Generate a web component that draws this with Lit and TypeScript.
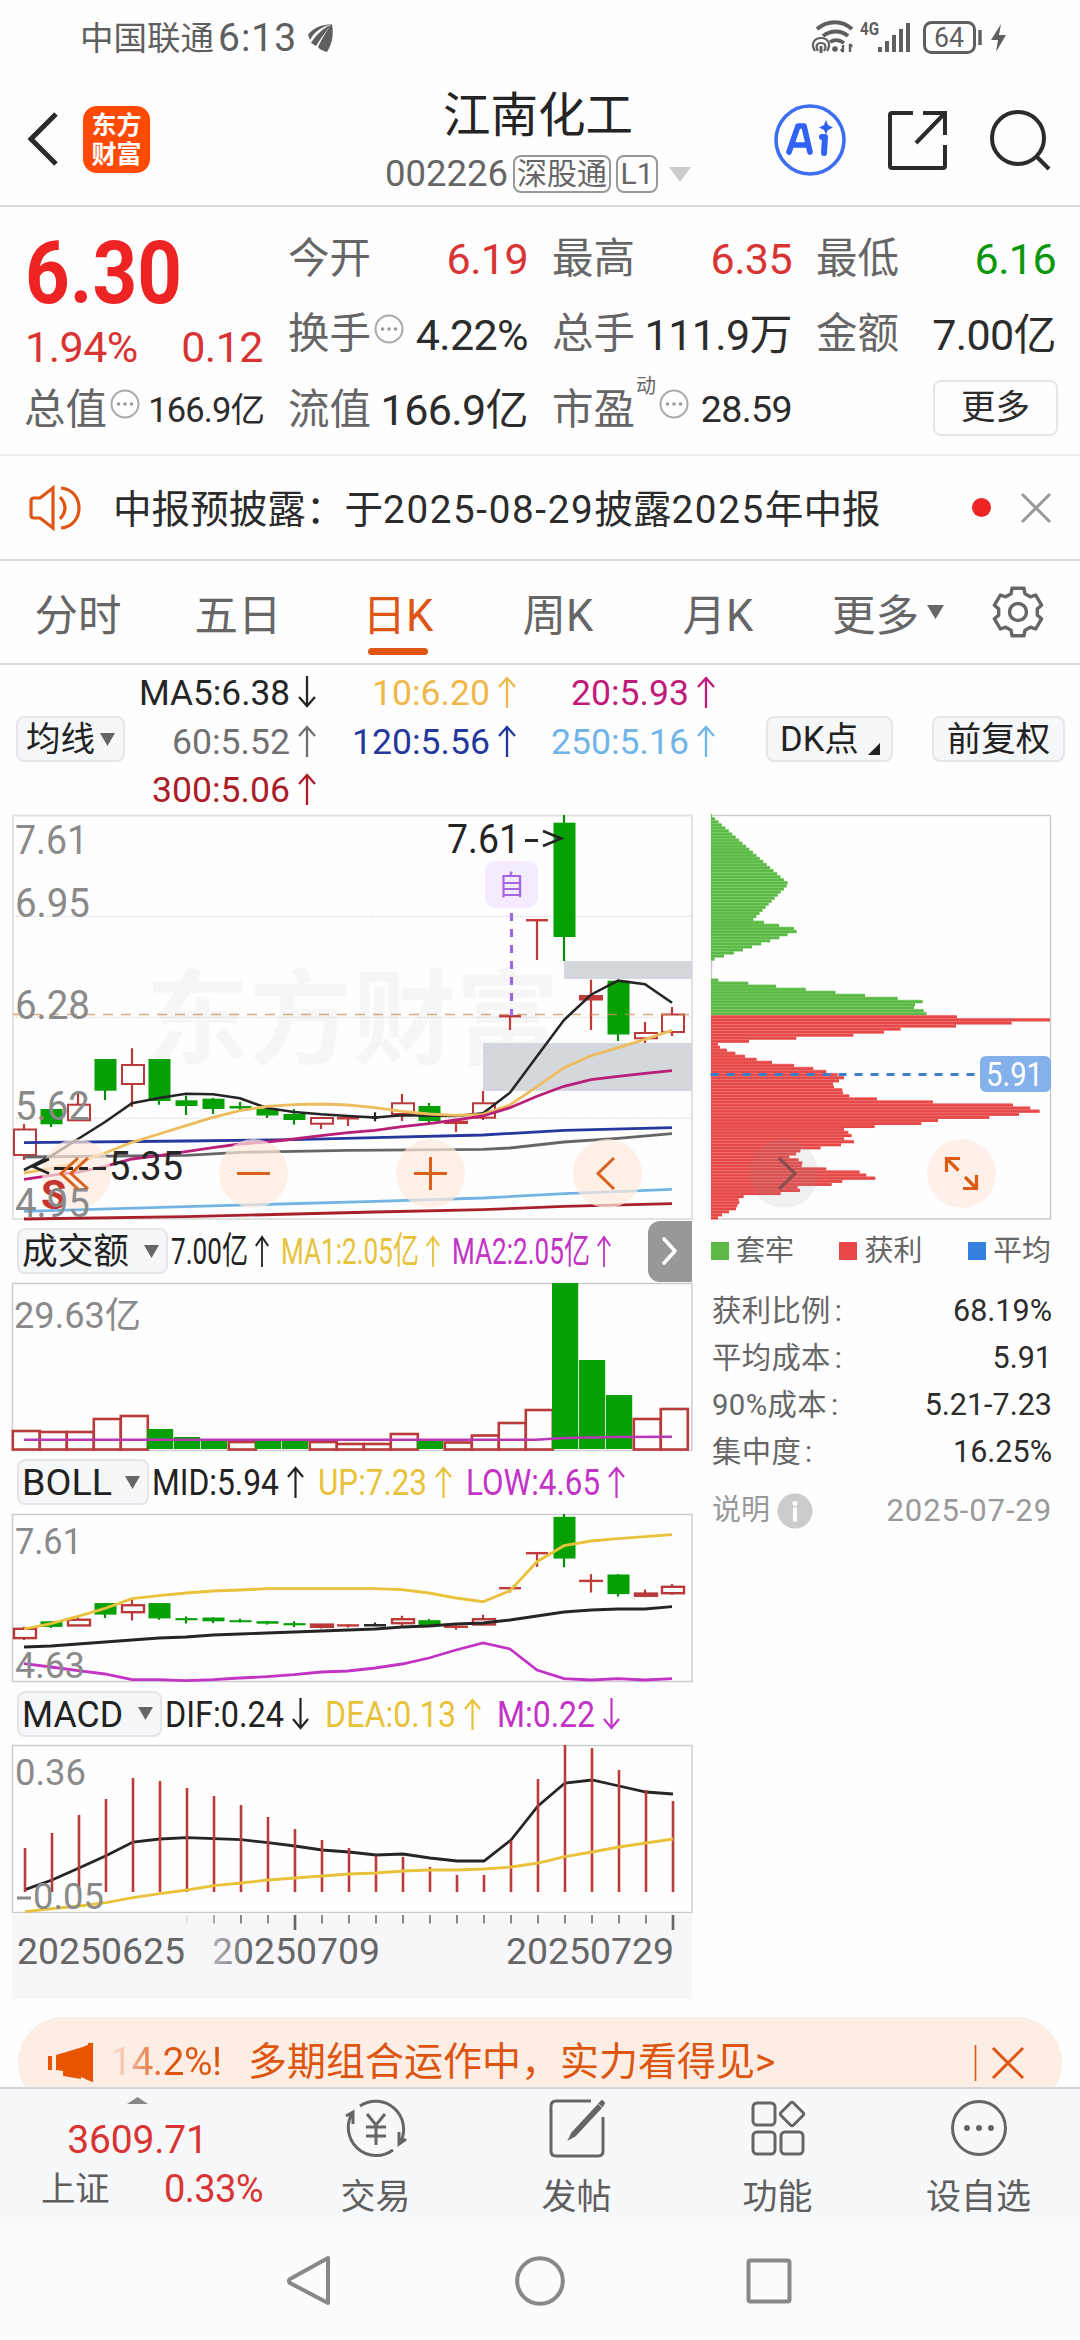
import { LitElement, html, svg, css } from "lit";
import { customElement } from "lit/decorators.js";

const RED = "#b93a3a";
const GREEN = "#04a004";
const INK = "#252525";
const GOLD = "#e8c23a";
const PURPLE = "#c233c6";

const STEP = 27;
const X0 = 24;

type Candle = { k: "r" | "g" | "f" | "b"; t: number; b: number; h: number; l: number };
const c = (k: Candle["k"], t: number, b: number, h: number, l: number): Candle => ({ k, t, b, h, l });

const CANDLES: Candle[] = [
  c("r", 1130.5, 1156, 1125, 1161), c("g", 1110, 1125.3, 1110, 1128), c("r", 1105.7, 1121.3, 1095, 1121),
  c("g", 1060, 1091.7, 1060, 1101), c("r", 1066, 1085, 1049.3, 1108), c("g", 1060, 1102, 1060, 1105.7),
  c("g", 1101.3, 1107, 1096.7, 1116), c("g", 1099.7, 1110, 1099, 1115), c("g", 1107, 1109.5, 1103, 1113),
  c("g", 1109.7, 1116.5, 1109, 1119), c("g", 1115, 1121, 1110, 1125.7), c("r", 1119, 1124.7, 1118, 1130),
  c("f", 1118, 1120.5, 1118, 1127), c("b", 1117.5, 1119.5, 1113.3, 1122.3), c("r", 1104.3, 1115, 1095, 1122),
  c("g", 1107, 1122, 1104, 1124), c("f", 1121.7, 1125, 1121, 1133), c("r", 1104.3, 1118.7, 1092, 1121),
  c("f", 1016, 1018, 1016, 1031), c("f", 920, 922, 920, 961), c("g", 823.7, 938, 816, 962),
  c("f", 996, 1001.5, 980.7, 1031), c("g", 981.7, 1035.5, 981, 1042), c("r", 1034, 1039.3, 1023, 1044),
  c("r", 1015.5, 1033, 1008, 1037),
];

const MA5 = [1171, 1157, 1140, 1123, 1104.3, 1099, 1094.7, 1095.3, 1099.3, 1109, 1113, 1115.3, 1117, 1118.5, 1116.3, 1116.7, 1117, 1114.3, 1093.7, 1057.3, 1021, 995.7, 981.7, 985.3, 1003.7];
const MA10 = [1174, 1169.3, 1163.3, 1154, 1143.3, 1135, 1126.7, 1118.3, 1111.7, 1107.3, 1105.7, 1105, 1106, 1108.7, 1112.3, 1115, 1116.3, 1115.3, 1106, 1087.7, 1068.7, 1056.7, 1048.7, 1040.3, 1031.3];
const MA20 = [1180.3, 1176.3, 1173, 1167.3, 1160, 1156.7, 1152.7, 1148.7, 1145, 1143, 1140, 1136.7, 1133.7, 1131.3, 1127.7, 1124.7, 1121, 1117, 1108.7, 1097.3, 1087.3, 1080.7, 1077.3, 1074.3, 1071.7];
const MA60: [number, number][] = [[0, 1158], [6, 1156.4], [8, 1153.3], [12, 1151.3], [17, 1150.3], [18, 1149], [20, 1143], [22, 1139.3], [24, 1134.7]];
const MA120: [number, number][] = [[0, 1143.7], [6, 1142], [10, 1140.7], [13, 1138.7], [17, 1136], [20, 1131.3], [24, 1128.7]];
const MA250: [number, number][] = [[0, 1212.3], [6, 1207.7], [13, 1202.3], [17, 1199], [20, 1194.7], [24, 1190.3]];
const MA300: [number, number][] = [[0, 1220], [6, 1217.7], [13, 1213], [17, 1210.7], [20, 1207.3], [24, 1204.7]];

const VOLUME: [string, number][] = [
  ["r", 1432], ["r", 1433], ["r", 1433], ["r", 1420], ["r", 1417], ["g", 1430], ["g", 1438], ["g", 1441], ["r", 1443], ["g", 1441],
  ["g", 1441], ["r", 1443], ["r", 1445], ["r", 1445], ["r", 1435], ["g", 1441], ["r", 1443.5], ["r", 1436.5], ["r", 1424], ["r", 1411],
  ["g", 1284], ["g", 1361], ["g", 1396], ["r", 1420], ["r", 1410],
];

const BOLL_UP = [1630, 1624.7, 1617.3, 1609.3, 1599.7, 1596.7, 1594, 1592, 1591, 1589.7, 1589.7, 1589.7, 1589.7, 1589.7, 1590.7, 1594, 1599, 1602.7, 1591.7, 1562.7, 1546.7, 1542, 1539.7, 1537.7, 1535.7];
const BOLL_MID = [1648, 1647, 1645, 1643, 1641, 1639, 1638, 1636, 1635, 1634, 1633, 1632, 1631, 1630, 1628, 1627, 1625, 1624, 1621, 1617, 1613, 1611, 1610, 1610, 1607.7];
const BOLL_LOW = [1664.7, 1668, 1671.7, 1675, 1680.7, 1680.7, 1681.7, 1680.7, 1679, 1677.7, 1675.7, 1673, 1672, 1669, 1665, 1659, 1651, 1644, 1650, 1671, 1679.7, 1681, 1679.7, 1681, 1679.7];

const third = (a: number[]) => a.map((v) => 1740 + v / 3);
const MACD_BAR = third([327, 282, 228, 180, 117, 126, 147, 171, 198, 234, 270, 303, 327, 350, 354, 384, 408, 408, 305, 120, 18, 27, 93, 153, 186]);
const DIF = third([452, 423, 387, 350, 309, 300, 296, 299, 302, 311, 321, 333, 339, 348, 345, 357, 366, 366, 303, 201, 132, 123, 141, 159, 165]);
const DEA = third([518, 509, 501, 491, 476, 464, 453, 440, 432, 423, 417, 411, 405, 402, 396, 393, 393, 390, 384, 372, 353, 339, 324, 312, 300]);

/* Cost distribution outline: level, extent. */
const CHIPS: [number, number][] = [
  [35, 35], [237, 263], [246, 260], [346, 160], [356, 192], [365, 237], [374, 282], [383, 290], [392, 263], [456, 72], [467, 44],
  [470, 33], [523, 33], [529, 55], [538, 145], [584, 593], [593, 668], [602, 645], [611, 642], [620, 671], [629, 680],
  [638, 771], [648, 1050], [658, 935], [667, 768], [676, 602], [685, 552], [694, 460], [703, 289], [712, 147], [721, 54], [730, 60],
  [739, 81], [748, 106], [757, 135], [767, 170], [776, 216], [785, 282], [794, 340], [803, 379], [812, 413], [821, 432], [831, 417],
  [840, 399], [849, 402], [858, 427], [867, 429], [877, 448], [886, 531], [895, 699], [904, 939], [913, 991], [922, 1019], [931, 957],
  [940, 868], [950, 714], [959, 664], [968, 524], [977, 432], [986, 445], [995, 455], [1004, 432], [1014, 462], [1023, 423], [1032, 362],
  [1041, 301], [1050, 288], [1059, 268], [1068, 296], [1078, 307], [1087, 305], [1096, 379], [1105, 479], [1114, 499], [1123, 526],
  [1133, 427], [1142, 395], [1151, 293], [1160, 300], [1169, 242], [1178, 131], [1187, 116], [1196, 118], [1205, 112], [1215, 108],
  [1224, 87], [1233, 66], [1242, 54],
];

/* Sampled levels are used as they are; levels between two samples are interpolated. */
function chipAt(level: number): number {
  const exact = CHIPS.find(([y]) => Math.abs(y - level) < 3.5);
  if (exact) return exact[1];
  for (let i = 1; i < CHIPS.length; i++) {
    const [y1, x1] = CHIPS[i];
    if (level <= y1) {
      const [y0, x0] = CHIPS[i - 1];
      return x0 + ((x1 - x0) * (level - y0)) / (y1 - y0);
    }
  }
  return 54;
}

const line = (pts: number[], color: string, w = 2.6, x0 = X0) =>
  svg`<polyline points=${pts.map((y, i) => `${x0 + i * STEP},${y}`).join(" ")} fill="none" stroke=${color} stroke-width=${w}/>`;
const sparse = (pts: [number, number][], color: string) =>
  svg`<polyline points=${pts.map(([i, y]) => `${X0 + i * STEP},${y}`).join(" ")} fill="none" stroke=${color} stroke-width="2.8"/>`;

function candles(map: (y: number) => number, sw: number) {
  return CANDLES.map((d, i) => {
    const x = X0 + i * STEP;
    const t = map(d.t), b = map(d.b), h = map(d.h), l = map(d.l);
    if (d.k === "g") return svg`<path d="M${x} ${h}V${l}" stroke="#0a8a0a" stroke-width="2.2"/><rect x=${x - 10.5} y=${t} width="22" height=${Math.max(b - t, 2)} fill=${GREEN}/>`;
    if (d.k === "r") return svg`<path d="M${x} ${h}V${t}M${x} ${b}V${l}" stroke=${RED} stroke-width="2.2"/><rect x=${x - 10} y=${t} width="22" height=${Math.max(b - t, 2.2)} fill="#fff" stroke=${RED} stroke-width=${sw}/>`;
    const col = d.k === "b" ? INK : "#c23a3a";
    const hw = d.h === d.t ? 11 : d.k === "b" ? (sw > 2 ? 11 : 3) : 12;
    return svg`<path d="M${x} ${h}V${l}" stroke=${col} stroke-width="2.2"/><rect x=${x - hw} y=${t} width=${hw * 2} height=${Math.max(b - t, 2.4)} fill=${col}/>`;
  });
}

const tx = (s: string, x: number, y: number, w: number, size = 37, color = "#8a8a8a", weight = 400) =>
  svg`<text x=${x} y=${y} textLength=${w} lengthAdjust="spacingAndGlyphs" font-size=${size} font-weight=${weight} fill=${color}>${s}</text>`;

const fit = (s: string, w: number, color: string, size = 37) =>
  html`<svg width=${w} height="46">${tx(s, 0, 36, w, size, color)}</svg>`;

const arrow = (up: boolean, color: string, w = 18) => html`<svg width=${w} height="34" viewBox="0 0 18 34" preserveAspectRatio="none">
  <path d=${up ? "M9 33V3M1 12L9 3L17 12" : "M9 1V31M1 22L9 31L17 22"} fill="none" stroke=${color} stroke-width="2.3"/></svg>`;

const sheet = css`
  :host { display: block; font-family: Roboto, "Noto Sans CJK SC", sans-serif; line-height: 1.17; }
  * { box-sizing: border-box; }
  svg { display: block; flex: none; overflow: visible; }
`;

@customElement("quote-header")
class QuoteHeader extends LitElement {
  static styles = [sheet, css`
    .status { height: 76px; padding: 0 73px 0 80px; display: flex; align-items: center; color: #5f5f5f; }
    .carrier { font-size: 33.5px; line-height: 46px; margin-top: 1px; }
    .clock { font-size: 39px; margin: 1px 10px 0 4px; letter-spacing: 1px; }
    .sp { flex: 1; }
    .bar { height: 131px; border-bottom: 2px solid #dadada; display: flex; align-items: center; padding: 0 29px 4px 27px; }
    .logo { width: 67px; height: 67px; border-radius: 14px; background: #ff4a05; margin-left: 24px; margin-top: 2px; color: #fff; font: 700 25px/29px "Noto Sans CJK SC", sans-serif; text-align: center; padding-top: 3px; }
    .mid { flex: 1; display: flex; flex-direction: column; align-items: center; padding: 8px 12px 0 165px; }
    .name { font-size: 47.500px; line-height: 60px; color: #242424; white-space: nowrap; }
    .sub { display: flex; align-items: center; color: #666; font-size: 36.5px; height: 50px; gap: 5px; margin-top: 3px; }
    .tag { border: 2px solid #999; border-radius: 8px; height: 38px; font-size: 30px; line-height: 34px; padding: 0 2px; }
    .l1 { width: 42px; text-align: center; }
    .tri { margin-left: 6px; }
    .icons { display: flex; align-items: center; margin-top: 3px; }
    .icons svg + svg { margin-left: 40px; }
  `];
  render() {
    return html`
      <div class="status">
        <span class="carrier">中国联通</span><span class="clock">6:13</span>
        <svg width="26" height="30" viewBox="0 0 26 30" fill="#5f5f5f"><path d="M1 12C6 5 13 2 25 1C14 4 7 9 3 17Z"/><path d="M4 20C9 12 15 6 25 1C19 8 14 15 9 23Z"/><path d="M11 24C15 15 20 7 25 1C27 12 25 21 20 29C17 28 13 27 11 24Z"/></svg>
        <span class="sp"></span>
        <svg width="195" height="36" viewBox="812 19 195 36" fill="none" stroke="#5f5f5f">
          <path d="M817 28C828 19 842 19 852 28" stroke-width="4"/><path d="M823 35C831 29 841 29 848 35" stroke-width="4"/>
          <path d="M830 41C835 38 840 39 844 42" stroke-width="3.5"/>
          <path d="M815 50C810 42 815 37 821 37S832 42 827 50M818 50C815 45 817 42 821 42S827 45 824 50" stroke-width="2.2"/><path d="M821 45V52" stroke-width="3"/>
          <circle cx="835" cy="48" r="2.8" fill="#5f5f5f" stroke="none"/><path d="M843 44V51M850 43V51M841 48L843 51M852 46L850 43" stroke-width="2.4"/>
          <text x="860" y="34" font-size="18" font-weight="700" textLength="19" lengthAdjust="spacingAndGlyphs" fill="#5f5f5f" stroke="none">4G</text>
          <path d="M880 46V51M887 40V51M894 34V51M901 28V51M908 22V51" stroke-width="4"/>
          <rect x="924.5" y="21.500" width="50" height="30" rx="7" stroke-width="3"/>
          <text x="934" y="46" font-size="27" textLength="30" lengthAdjust="spacingAndGlyphs" fill="#5f5f5f" stroke="none">64</text>
          <path d="M980 29V44" stroke-width="3.4"/><path d="M1001 23L991 39H998L996 51L1006 34H999Z" fill="#5f5f5f" stroke="none"/>
        </svg>
      </div>
      <div class="bar">
        <svg width="32" height="56" viewBox="0 0 32 56"><path d="M29 3L4 28L29 53" fill="none" stroke="#2b2b2b" stroke-width="5"/></svg>
        <div class="logo">东方<br />财富</div>
        <div class="mid">
          <div class="name">江南化工</div>
          <div class="sub"><span>002226</span><span class="tag">深股通</span><span class="tag l1">L1</span>
            <svg class="tri" width="22" height="15"><path d="M0 0H22L11 15Z" fill="#ccc"/></svg></div>
        </div>
        <div class="icons">
          <svg width="74" height="74" viewBox="0 0 74 74"><circle cx="37" cy="37" r="34" fill="none" stroke="#3d6df0" stroke-width="3.6"/>
            <path d="M16 49L25 23H31L37 49M19 42H35" fill="none" stroke="#2f62f5" stroke-width="5.600" stroke-linejoin="round" stroke-linecap="round"/><path d="M49 34H52L51 50" fill="none" stroke="#2f62f5" stroke-width="6" stroke-linejoin="round" stroke-linecap="round"/><path d="M53 17L55 22L60 24.500L55 27L53 31.500L51 27L46 24.500L51 22Z" fill="#2f62f5"/></svg>
          <svg width="62" height="62" viewBox="0 0 62 62" fill="none" stroke="#2b2b2b" stroke-width="4"><path d="M26 4H5Q3 4 3 6V57Q3 59 5 59H56Q58 59 58 57V36M36 4H58V26M58 4L29 34"/></svg>
          <svg width="62" height="62" viewBox="0 0 62 62" fill="none" stroke="#2b2b2b" stroke-width="4"><circle cx="29" cy="29" r="26"/><path d="M47 47L60 60"/></svg>
        </div>
      </div>`;
  }
}

@customElement("quote-stats")
class QuoteStats extends LitElement {
  static styles = [sheet, css`
    .stats { height: 249px; display: grid; grid-template-columns: repeat(4, 237px); column-gap: 27px; padding: 0 26px; border-bottom: 2px solid #eee; }
    .col { padding-top: 14px; }
    .row { height: 75.500px; display: flex; align-items: center; font-size: 42px; white-space: nowrap; color: #2c2c2c; }
    .lab { color: #666; font-size: 41.500px; margin-left: -2px; padding-top: 1px; }
    .v { margin-left: auto; font-size: 43px; letter-spacing: -0.600px; margin-right: -1px; padding-top: 1px; }
    .red { color: #d93434; }
    .green { color: #0a960a; }
    .s1 { font-size: 34.500px; letter-spacing: -0.900px; }
    .s2 { font-size: 37.500px; }
    .price { height: 97px; padding-top: 0; }
    .chg { height: 54px; padding: 5px 0 0; justify-content: space-between; }
    .chg span { font-size: 43px; letter-spacing: -0.500px; margin-left: -1px; }
    .q { margin: -11px 0 0 3px; }
    .sup { font-size: 20px; align-self: flex-start; margin: 0 2px 0 1px; color: #666; line-height: 22px; padding-top: 3px; }
    .sup + .q { margin-left: 1px; }
    .more { margin: -4px -3px 0 auto; width: 125px; height: 56px; border: 2px solid #e6e6e6; border-radius: 8px; font-size: 34.500px; line-height: 51px; text-align: center; }
  `];
  render() {
    const q = html`<svg class="q" width="30" height="30" viewBox="0 0 30 30"><circle cx="15" cy="15" r="13.500" fill="none" stroke="#aaa" stroke-width="2"/><g fill="#999"><circle cx="8.500" cy="15" r="1.800"/><circle cx="15" cy="15" r="1.800"/><circle cx="21.500" cy="15" r="1.800"/></g></svg>`;
    return html`<div class="stats">
      <div class="col">
        <div class="price"><svg width="237" height="97">${tx("6.30", -1, 82, 157, 87, "#ee2424", 700)}</svg></div>
        <div class="row chg red"><span>1.94%</span><span>0.12</span></div>
        <div class="row"><span class="lab">总值</span>${q}<span class="v s1">166.9亿</span></div>
      </div>
      <div class="col">
        <div class="row"><span class="lab">今开</span><span class="v red">6.19</span></div>
        <div class="row"><span class="lab">换手</span>${q}<span class="v">4.22%</span></div>
        <div class="row"><span class="lab">流值</span><span class="v">166.9亿</span></div>
      </div>
      <div class="col">
        <div class="row"><span class="lab">最高</span><span class="v red">6.35</span></div>
        <div class="row"><span class="lab">总手</span><span class="v">111.9万</span></div>
        <div class="row"><span class="lab">市盈</span><span class="sup">动</span>${q}<span class="v s2">28.59</span></div>
      </div>
      <div class="col">
        <div class="row"><span class="lab">最低</span><span class="v green">6.16</span></div>
        <div class="row"><span class="lab">金额</span><span class="v">7.00亿</span></div>
        <div class="row"><span class="more">更多</span></div>
      </div>
    </div>`;
  }
}

@customElement("quote-tabs")
class QuoteTabs extends LitElement {
  static styles = [sheet, css`
    .notice { height: 105px; border-bottom: 2px solid #d9d9d9; display: flex; align-items: center; padding: 0 29px 0 29px; }
    .msg { flex: 1; font-size: 38.600px; margin-left: 30px; padding-top: 4px; color: #2b2b2b; white-space: nowrap; }
    .msg span { letter-spacing: 1.650px; }
    .dot { width: 19px; height: 19px; border-radius: 50%; background: #ee2424; margin-right: 30px; }
    .tabs { height: 104px; border-bottom: 2px solid #d9d9d9; display: flex; align-items: center; font-size: 43.500px; color: #666; }
    .tab { width: 160px; text-align: center; height: 102px; line-height: 112px; position: relative; left: -2px; white-space: nowrap; }
    .on { color: #df5514; }
    .on::after { content: ""; position: absolute; left: 50px; bottom: 8px; width: 60px; height: 7px; border-radius: 4px; background: #df5514; }
    .more { display: flex; align-items: center; padding-left: 34px; gap: 8px; line-height: 102px; }
    .more b { font-weight: 400; padding-top: 9px; }
    .gear { margin: 0 0 0 31px; }
  `];
  render() {
    const teeth = Array.from({ length: 6 }, (_, i) => {
      const a = (deg: number, r: number) => {
        const t = ((i * 60 - 90 + deg) * Math.PI) / 180;
        return `${(27 + r * Math.cos(t)).toFixed(1)},${(27 + r * Math.sin(t)).toFixed(1)}`;
      };
      return `${a(-21, 19.5)} ${a(-14, 24.5)} ${a(14, 24.5)} ${a(21, 19.5)}`;
    }).join(" ");
    return html`
      <div class="notice">
        <svg width="54" height="46" viewBox="0 0 54 46" fill="none" stroke="#df5514" stroke-width="3.200"><path d="M24 3V43L11 33H5Q2 33 2 30V16Q2 13 5 13H11Z"/><path d="M31 12Q41 23 31 34" /><path d="M32 3C56 5 56 41 32 43"/></svg>
        <div class="msg">中报预披露：于<span>2025-08-29</span>披露<span>2025</span>年中报</div>
        <span class="dot"></span>
        <svg width="30" height="30"><path d="M1 1L29 29M29 1L1 29" stroke="#999" stroke-width="3"/></svg>
      </div>
      <div class="tabs">
        <span class="tab">分时</span><span class="tab">五日</span><span class="tab on">日K</span><span class="tab">周K</span><span class="tab">月K</span>
        <span class="tab more"><b>更多</b><svg width="17" height="14"><path d="M0 0H17L8.500 14Z" fill="#666"/></svg></span>
        <svg class="gear" width="54" height="54" viewBox="0 0 54 54" fill="none" stroke="#666" stroke-width="3.400" stroke-linejoin="round"><polygon points=${teeth}/><circle cx="27" cy="27" r="8.500"/></svg>
      </div>`;
  }
}

@customElement("ma-strip")
class MaStrip extends LitElement {
  static styles = [sheet, css`
    .strip { height: 146px; display: grid; grid-template-columns: 108px 597px 1fr; padding: 0 15px 0 16px; align-items: start; }
    .btn { height: 46px; border: 2px solid #e4e6e9; border-radius: 8px; background: #f6f7f9; color: #222; font-size: 34.500px; line-height: 43px; display: flex; align-items: center; margin-top: 51px; white-space: nowrap; }
    .avg { width: 109px; padding-left: 8px; gap: 5px; }
    .vals { display: grid; grid-template-columns: 192px 199.500px 199.500px; grid-auto-rows: 48.500px; padding-top: 3px; }
    .ma { display: flex; justify-content: flex-end; align-items: center; gap: 8px; }
    .right { display: flex; justify-content: space-between; padding-left: 45px; }
    .dk { width: 127px; padding-left: 12px; gap: 9px; }
    .dk svg { margin-top: 20px; }
    .fq { width: 133px; justify-content: center; }
  `];
  render() {
    const rows: [string, number, string, boolean][] = [
      ["MA5:6.38", 151, "#252525", false], ["10:6.20", 118, "#f0b84c", true], ["20:5.93", 118, "#c01a7c", true],
      ["60:5.52", 118, "#707070", true], ["120:5.56", 138, "#24379c", true], ["250:5.16", 138, "#6fb5e8", true],
      ["300:5.06", 138, "#ac1c28", true],
    ];
    return html`<div class="strip">
      <div class="btn avg"><span>均线</span><svg width="15" height="13"><path d="M0 0H15L7.500 13Z" fill="#666"/></svg></div>
      <div class="vals">${rows.map(([s, w, col, up]) => html`<div class="ma">${fit(s, w, col, 35.5)}${arrow(up, col, 18)}</div>`)}</div>
      <div class="right">
        <span class="btn dk"><span>DK点</span><svg width="12" height="12"><path d="M12 0V12H0Z" fill="#222"/></svg></span>
        <span class="btn fq"><span>前复权</span></span>
      </div>
    </div>`;
  }
}

@customElement("kline-panels")
class KlinePanels extends LitElement {
  static styles = [sheet, css`
    .head { display: flex; align-items: center; padding-left: 17px; color: #222; width: 692px; }
    .h60 { height: 60px; } .h58 { height: 58px; } .h57 { height: 57px; }
    .btn { height: 46px; border: 2px solid #e4e6e9; border-radius: 8px; background: #f6f7f9; display: flex; align-items: center; justify-content: space-between; padding: 0 7px 0 3px; margin-right: 3px; }
    .w1 { width: 151px; } .w2 { width: 132px; } .w3 { width: 145px; }
    .vals { display: flex; align-items: center; }
    .vals .arr { margin: 0 14px 0 8px; }
    .h57 .arr { margin: 0 16px 0 8px; }
    .h60 .arr { margin: 0 12px 0 7px; }
    .next { margin-left: auto; width: 44px; height: 61px; border-radius: 12px 0 0 12px; background: #989898; display: flex; align-items: center; justify-content: center; }
  `];
  head(cls: string, bcls: string, name: string, nw: number, vals: [string, number, string, boolean][], aw: number, next = false) {
    return html`<div class="head ${cls}">
      <div class="btn ${bcls}">${fit(name, nw, "#222", 36)}<svg width="15" height="13"><path d="M0 0H15L7.500 13Z" fill="#666"/></svg></div>
      <div class="vals">${vals.map(([s, w, col, up]) => html`${fit(s, w, col)}<span class="arr">${arrow(up, col, aw)}</span>`)}</div>
      ${next ? html`<div class="next"><svg width="16" height="28"><path d="M2 2L13 14L2 26" fill="none" stroke="#fff" stroke-width="3.600" stroke-linecap="round" stroke-linejoin="round"/></svg></div>` : ""}
    </div>`;
  }
  main() {
    const o = "#d9611c";
    return html`<svg width="700" height="410" viewBox="0 812 700 410">
      <rect x="13" y="816.500" width="679" height="403.500" fill="#fefefe" stroke="#e2e2e2" stroke-width="2"/>
      <text x="146" y="1057" font-size="103" font-weight="700" textLength="413" fill="#f6f6f6">东方财富</text>
      <path d="M13 917.300H692M13 1018.300H692M13 1119.300H692" stroke="#cfcfcf" stroke-width="1" stroke-dasharray="1.500 1.500"/>
      <rect x="564" y="962" width="128" height="18" fill="#d4d7dc"/><rect x="483" y="1044" width="209" height="48" fill="#d4d7dc"/>
      ${candles((y) => y, 2)}
      <path d="M13 1015.500H692" stroke="#c98f55" stroke-opacity=".75" stroke-width="1.500" stroke-dasharray="10 8"/>
      ${sparse(MA60, "#666")}${sparse(MA120, "#26389e")}${sparse(MA250, "#74b4e4")}${sparse(MA300, "#a8202c")}
      ${line(MA5, INK)}${line(MA10, "#edbc5c", 2.8)}${line(MA20, "#b81f78", 2.8)}
      ${tx("7.61", 15, 855, 73, 40)}${tx("6.95", 15, 918, 75, 40)}${tx("6.28", 15, 1020, 75, 40)}${tx("5.62", 15, 1121, 75, 40)}
      ${tx("7.61", 447, 853.5, 73, 40, INK)}
      <path d="M525 841.500H538M543 832L561 839.500L543 847" fill="none" stroke=${INK} stroke-width="2.800"/>
      <g fill="#ffe9dd" fill-opacity=".7"><circle cx="76.500" cy="1174.500" r="34.500"/><circle cx="253.500" cy="1174.500" r="34.500"/><circle cx="430.500" cy="1174.500" r="34.500"/><circle cx="607.500" cy="1174.500" r="34.500"/></g>
      <text x="41" y="1210" font-size="41" font-weight="700" fill="#c5352f">S</text>
      ${tx("4.95", 15, 1218, 75, 40)}
      <path d="M49 1160L33 1167.500L49 1174.500M54 1169.500H73M79 1169.500H88M93 1169.500H106" fill="none" stroke=${INK} stroke-width="2.800"/>
      ${tx("5.35", 109, 1181, 74, 40, INK)}
      <path d="M78 1159L61 1174.500L78 1190M88 1159L71 1174.500L88 1190M237 1174.500H270M414 1174.500H447M430.500 1158V1191M614 1159L598 1174.500L614 1190" fill="none" stroke=${o} stroke-width="3"/>
      <rect x="485" y="862" width="53" height="47" rx="11" fill="#f4ebff"/>
      <text x="498" y="896" font-size="27" fill="#a267de">自</text>
      <path d="M511.500 914V1017" stroke="#a267de" stroke-width="3.200" stroke-dasharray="8 8"/>
    </svg>`;
  }
  volume() {
    return html`<svg width="700" height="172" viewBox="0 1282 700 172">
      <rect x="12.500" y="1284.500" width="679.500" height="167" fill="#fefefe" stroke="#cacaca" stroke-width="1.400"/>
      ${tx("29.63亿", 14, 1329, 127, 36)}
      ${VOLUME.map(([k, y], i) => {
        const x = 12 + i * STEP;
        return k === "g" ? svg`<rect x=${x} y=${y} width="26.200" height=${1450 - y} fill=${GREEN}/>`
          : svg`<rect x=${x + 0.8} y=${y} width="27" height=${1450.5 - y} fill="#fefefe" stroke=${RED} stroke-width="2.600"/>`;
      })}
      <polyline points="24,1440.700 536,1440.700 564,1439 618,1438 672,1437.700" fill="none" stroke="#b838b4" stroke-width="2.600"/>
    </svg>`;
  }
  boll() {
    return html`<svg width="700" height="174" viewBox="0 1512 700 174">
      <rect x="12.500" y="1515.500" width="679.500" height="167" fill="#fefefe" stroke="#cacaca" stroke-width="1.400"/>
      ${candles((y) => 1515 + (y - 816) * 0.365, 2.4)}
      ${line(BOLL_MID, INK, 2.8)}${line(BOLL_UP, GOLD, 2.8)}${line(BOLL_LOW, PURPLE, 2.8)}
      ${tx("7.61", 15, 1555, 67, 36)}${tx("4.63", 15, 1679, 70, 36)}
    </svg>`;
  }
  macd() {
    return html`<svg width="700" height="173" viewBox="0 1743 700 173">
      <rect x="12.500" y="1746.500" width="679.500" height="167" fill="#fefefe" stroke="#cacaca" stroke-width="1.400"/>
      ${line(DIF, INK, 2.8, 25)}
      ${MACD_BAR.map((y, i) => svg`<path d="M${25 + i * STEP} ${y}V1893" stroke="#ba3c3c" stroke-width="2.600"/>`)}
      ${line(DEA, GOLD, 2.8, 25)}
      ${tx("0.36", 15, 1786, 71, 36)}
      <path d="M17 1899H31" stroke="#8a8a8a" stroke-width="3"/>${tx("0.05", 33, 1910, 71, 36)}
    </svg>`;
  }
  axis() {
    const ticks = Array.from({ length: 19 }, (_, j) => j + 6);
    return html`<svg width="700" height="84" viewBox="0 1916 700 84">
      <defs><linearGradient id="fade" gradientUnits="userSpaceOnUse" x1="205" y1="0" x2="250" y2="0"><stop offset="0" stop-color="#666" stop-opacity=".35"/><stop offset="1" stop-color="#666"/></linearGradient></defs>
      <rect x="12" y="1916" width="680" height="84" fill="#f7f7fa"/>
      ${ticks.map((i) => {
        const major = i === 10 || i === 24;
        return svg`<path d="M${25 + i * STEP} 1916V${major ? 1931 : 1924.5}" stroke="#666" stroke-opacity=${i === 6 ? 0.15 : i === 7 ? 0.7 : 1} stroke-width=${major ? 2.6 : 1.5}/>`;
      })}
      ${tx("20250625", 17, 1965, 168, 36, "#666")}${tx("20250709", 212, 1965, 168, 36, "url(#fade)")}${tx("20250729", 506, 1965, 168, 36, "#666")}
    </svg>`;
  }
  render() {
    return html`
      ${this.main()}
      ${this.head("h60", "w1", "成交额", 107, [["7.00亿", 77, "#222", true], ["MA1:2.05亿", 138, GOLD, true], ["MA2:2.05亿", 138, PURPLE, true]], 14, true)}
      ${this.volume()}
      ${this.head("h58", "w2", "BOLL", 90, [["MID:5.94", 127, "#222", true], ["UP:7.23", 109, GOLD, true], ["LOW:4.65", 134, PURPLE, true]], 17)}
      ${this.boll()}
      ${this.head("h57", "w3", "MACD", 101, [["DIF:0.24", 119, "#222", false], ["DEA:0.13", 131, GOLD, true], ["M:0.22", 98, PURPLE, false]], 17)}
      ${this.macd()}${this.axis()}`;
  }
}

@customElement("chip-panel")
class ChipPanel extends LitElement {
  static styles = [sheet, css`
    .legend { height: 60px; display: flex; justify-content: space-between; align-items: center; padding: 0 29px 0 11px; color: #666; font-size: 29px; }
    .legend span { display: flex; align-items: center; gap: 7px; }
    .legend b { font-weight: 400; padding-top: 1px; }
    .sq { width: 18px; height: 18px; }
    .g { background: #5cb946; } .r { background: #e84848; } .b { background: #3480e0; }
    .rows { padding: 6px 28px 0 12px; }
    .row { height: 47px; display: flex; justify-content: space-between; align-items: center; font-size: 29.300px; color: #666; }
    .row span { letter-spacing: 0.400px; padding-top: 1px; }
    .row i { font-style: normal; margin-left: 4px; }
    .row em { font-style: normal; font-size: 30.500px; color: #2c2c2c; }
    .foot { height: 50px; margin-top: 10px; padding: 2px 28px 0 12px; display: flex; align-items: center; font-size: 29px; color: #999; gap: 7px; }
    .date { margin-left: auto; font-size: 31px; letter-spacing: 0.900px; }
  `];
  render() {
    const bars = Array.from({ length: 133 }, (_, k) => {
      const lv = 35 + k * 9.135;
      const w = (chipAt(lv) - 33) / 3;
      return w > 1 || k < 2 ? svg`<rect x="711" y=${805 + lv / 3 - 1.3} width=${Math.max(w, 1)} height="3.1" fill=${lv < 634 ? "#5cb946" : "#e64848"}/><path d="M711 ${805 + lv / 3 - 1.2}h${Math.max(w - 1, 1)}" stroke=${lv < 634 ? "#79cf66" : "#f07070"} stroke-width=".7"/>` : "";
    });
    return html`
      <svg width="380" height="410" viewBox="700 812 380 410">
        <rect x="711.500" y="816.500" width="339" height="403.500" fill="#fefefe" stroke="#c9c9c9" stroke-width="1.400"/>
        ${bars}
        <path d="M710.500 1075.500H976" stroke="#3f7ccb" stroke-width="3" stroke-dasharray="8 8"/>
        <rect x="980" y="1057" width="71" height="36" rx="6" fill="#84b1ec"/>
        ${tx("5.91", 986, 1086.5, 57, 33, "#fff")}
        <circle cx="784" cy="1174.500" r="34.500" fill="#888" fill-opacity=".12"/><circle cx="961.500" cy="1174.500" r="34.500" fill="#fef0e8"/>
        <path d="M779 1159L795 1174.500L779 1190" fill="none" stroke="#8a5050" stroke-width="3.200"/>
        <path d="M946.500 1173V1159.500H960M948 1161L958.500 1171.500M976.500 1176V1189.500H963M965 1178L976 1189" fill="none" stroke="#dd5a14" stroke-width="3.200"/>
      </svg>
      <div class="legend"><span><i class="sq g"></i><b>套牢</b></span><span><i class="sq r"></i><b>获利</b></span><span><i class="sq b"></i><b>平均</b></span></div>
      <div class="rows">
        ${[["获利比例", "68.19%"], ["平均成本", "5.91"], ["90%成本", "5.21-7.23"], ["集中度", "16.25%"]].map(([a, b]) => html`<div class="row"><span>${a}<i>:</i></span><em>${b}</em></div>`)}
      </div>
      <div class="foot"><span>说明</span><svg width="36" height="36"><circle cx="18" cy="18" r="17.500" fill="#ccc"/><circle cx="18" cy="10.500" r="2.500" fill="#fff"/><path d="M18 16V27" stroke="#fff" stroke-width="4" stroke-linecap="round"/></svg><span class="date">2025-07-29</span></div>`;
  }
}

@customElement("bottom-bar")
class BottomBar extends LitElement {
  static styles = [sheet, css`
    .promo { height: 88px; padding: 18px 18px 0; overflow: hidden; }
    .pill { height: 91px; border-radius: 46px; background: #fdeee5; color: #de5510; display: flex; align-items: center; padding: 0 38px 0 29px; font-size: 39px; white-space: nowrap; }
    .pct { margin-left: 15px; width: 138px; background: linear-gradient(90deg, rgba(222, 85, 16, 0.05), #de5510 42%); -webkit-background-clip: text; color: transparent; letter-spacing: -0.500px; }
    .pill .end { margin-left: auto; }
    .bar { height: 136px; background: #f7f8fa; border-top: 2px solid #d3d5d9; display: grid; grid-template-columns: 275px repeat(4, 201px); color: #5f5f5f; }
    .idx { padding-top: 8px; display: flex; flex-direction: column; align-items: center; color: #d93434; }
    .n { font-size: 39px; line-height: 46px; margin-top: 13px; letter-spacing: -0.200px; }
    .p { font-size: 38px; line-height: 46px; display: flex; align-items: center; width: 222px; justify-content: space-between; margin: 3px 0 0 29px; letter-spacing: -0.600px; }
    .p b { font-weight: 400; color: #5f5f5f; font-size: 34.500px; }
    .item { display: flex; flex-direction: column; align-items: center; font-size: 35px; line-height: 46px; padding-top: 8px; }
    .item svg { margin-bottom: 16px; }
    .nav { height: 116px; background: #fcfcfc; }
  `];
  render() {
    const s = (d: unknown) => html`<svg width="66" height="62" viewBox="0 0 66 62" fill="none" stroke="#666" stroke-width="3">${d}</svg>`;
    return html`
      <div class="promo"><div class="pill">
        <svg width="48" height="40" viewBox="0 0 48 40" fill="#e85500"><path d="M1 13H5V27H1ZM9 12L39 3V36L34 34V36L16 33V28L9 27ZM41 0H46V39L41 37Z"/><path d="M38 3L46 0V39L38 36Z"/></svg>
        <span class="pct">14.2%!</span><span>多期组合运作中，实力看得见&gt;</span>
        <svg class="end" width="50" height="38"><path d="M1.500 1V37" stroke="#de5510" stroke-width="1.600"/><path d="M19 4L49 34M49 4L19 34" stroke="#de5510" stroke-width="3"/></svg>
      </div></div>
      <div class="bar">
        <div class="idx"><svg width="21" height="7"><path d="M0 7L10.500 0L21 7Z" fill="#888"/></svg><div class="n">3609.71</div><div class="p"><b>上证</b><span>0.33%</span></div></div>
        <div class="item">${s(svg`<path d="M17 9A28 28 0 0 1 57 46M50 53A28 28 0 0 1 10 15M3 19L10 15V27M63 42L56 47V35" /><path d="M24 17L33 28L42 17M33 28V48M23 30H43M23 39H43"/>`)}<span>交易</span></div>
        <div class="item">${s(svg`<path d="M47 4H12Q7 4 7 9V54Q7 59 12 59H54Q59 59 59 54V20"/><path d="M54 8L28 36L25 42L31 39L57 11Z" fill="#666" stroke-width="1.500"/><path d="M55.500 6.500L58 4L60 6L58.500 9Z" fill="#666" stroke-width="2"/>`)}<span>发帖</span></div>
        <div class="item">${s(svg`<rect x="8" y="6" width="22" height="22" rx="4"/><rect x="8" y="35" width="22" height="22" rx="4"/><rect x="36" y="35" width="22" height="22" rx="4"/><path d="M45.500 6L36 15.500Q34.500 17 36 18.500L45.500 28Q47 29.500 48.500 28L58 18.500Q59.500 17 58 15.500L48.500 6Q47 4.500 45.500 6Z"/>`)}<span>功能</span></div>
        <div class="item">${s(svg`<circle cx="33" cy="31" r="26.500"/><g fill="#666" stroke="none"><circle cx="21" cy="31" r="3"/><circle cx="33" cy="31" r="3"/><circle cx="45" cy="31" r="3"/></g>`)}<span>设自选</span></div>
      </div>
      <svg class="nav" width="1080" height="116" viewBox="0 2224 1080 116" fill="none" stroke="#888" stroke-width="4" stroke-linejoin="round">
        <path d="M328 2259V2304L290 2284Q288 2282 290 2280Z"/><circle cx="540" cy="2282" r="22.800"/><rect x="748.500" y="2261.500" width="41" height="41" rx="2"/>
      </svg>`;
  }
}

@customElement("app-root")
class AppRoot extends LitElement {
  static styles = css`
    :host { display: block; width: 1080px; height: 2340px; background: #fefefe; overflow: hidden; }
    .charts { display: grid; grid-template-columns: 700px 380px; height: 1188px; }
  `;
  render() {
    return html`<quote-header></quote-header><quote-stats></quote-stats><quote-tabs></quote-tabs><ma-strip></ma-strip>
      <div class="charts"><kline-panels></kline-panels><chip-panel></chip-panel></div>
      <bottom-bar></bottom-bar>`;
  }
}
